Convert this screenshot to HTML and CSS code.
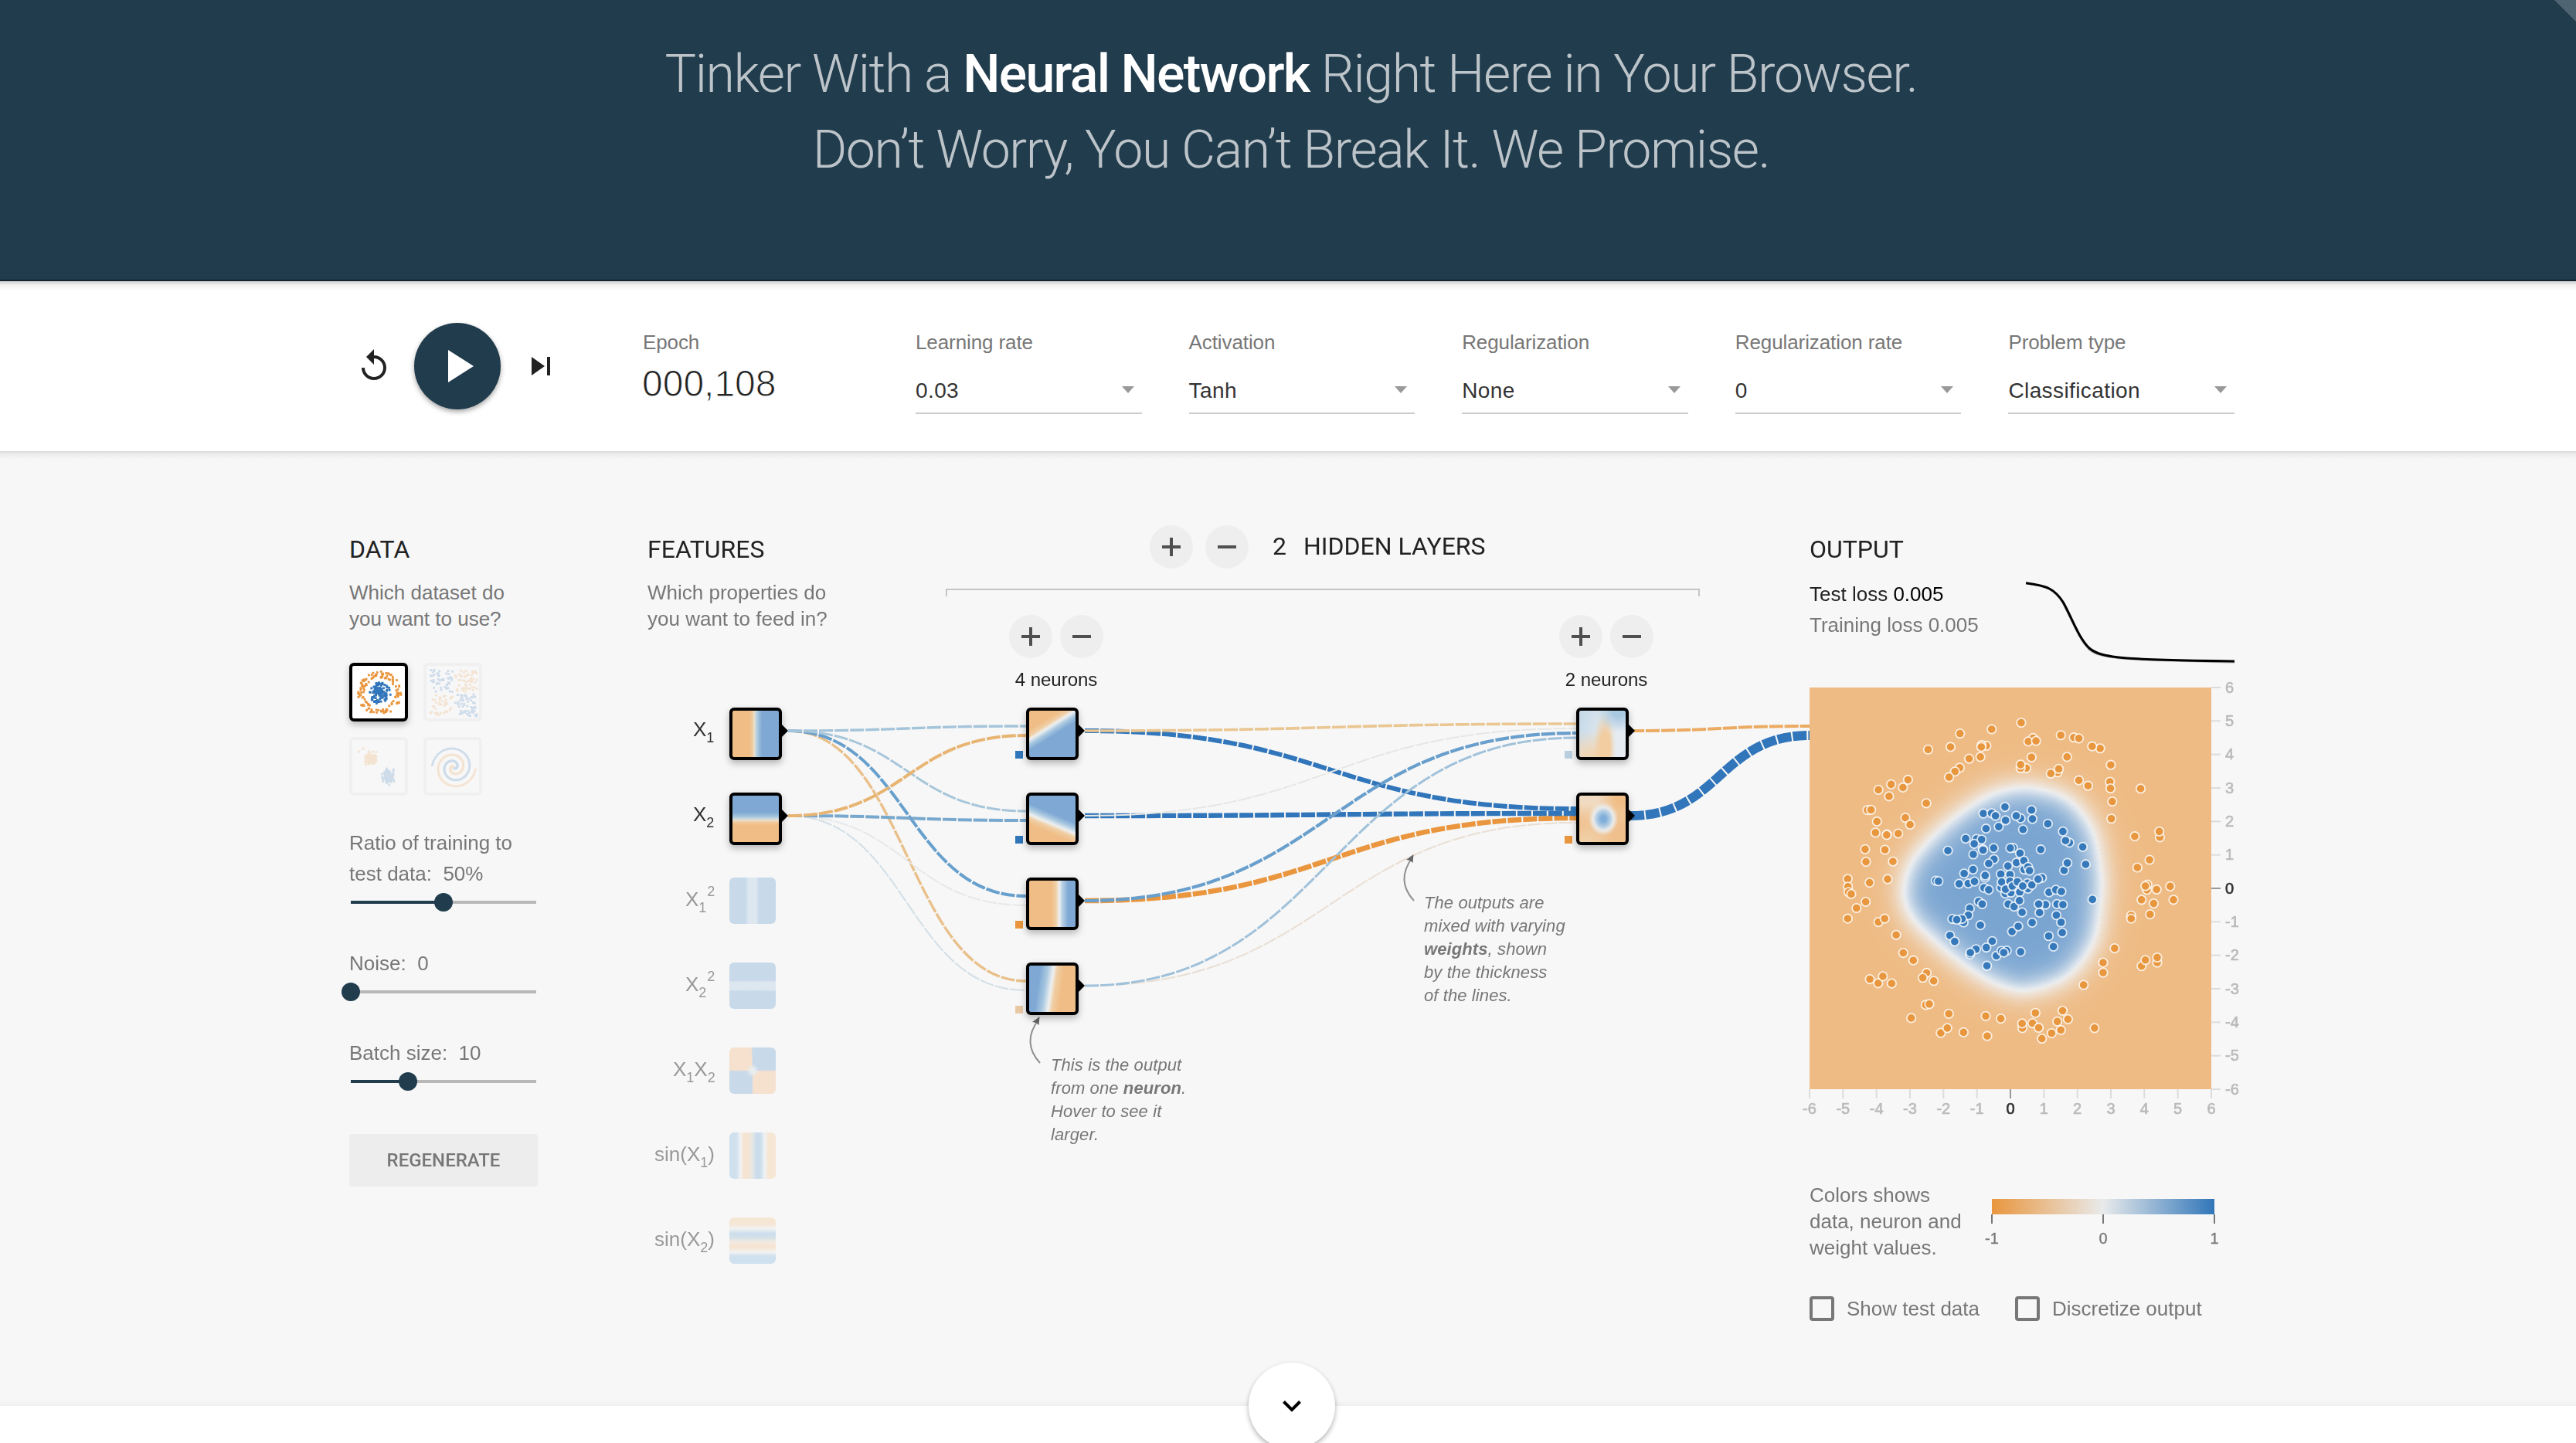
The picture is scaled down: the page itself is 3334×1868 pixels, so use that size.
FILE: index.html
```html
<!DOCTYPE html>
<html lang="en">
<head>
<meta charset="utf-8">
<title>A Neural Network Playground</title>
<link rel="stylesheet" href="styles.css">
</head>
<body>
<header class="hero">
  <h1 class="hero-title">
    <span class="l1">Tinker With a <b>Neural Network</b> Right Here in Your Browser.</span>
    <span class="l2">Don’t Worry, You Can’t Break It. We Promise.</span>
  </h1>
  <svg class="corner" width="28" height="28" viewBox="0 0 28 28"><path d="M0 0H28V28Z" fill="#4f6472"/></svg>
</header>

<section class="controls">
  <div class="container controls-row">
    <div class="timeline">
      <svg width="48" height="48" viewBox="0 0 24 24" fill="#222"><path d="M12 5V1L7 6l5 5V7c3.31 0 6 2.69 6 6s-2.69 6-6 6-6-2.69-6-6H4c0 4.42 3.58 8 8 8s8-3.58 8-8-3.58-8-8-8z"/></svg>
      <div class="play"><svg width="72" height="72" viewBox="0 0 24 24" fill="#fff"><path d="M8 5v14l11-7z"/></svg></div>
      <svg width="48" height="48" viewBox="0 0 24 24" fill="#222"><path d="M6 18l8.5-6L6 6v12zM16 6v12h2V6h-2z"/></svg>
    </div>
    <div class="epoch"><div class="label">Epoch</div><div class="epoch-value">000,108</div></div>
    <div class="selects">
      <div class="control"><div class="label">Learning rate</div><div class="select"><span>0.03</span><i class="caret"></i></div></div>
      <div class="control"><div class="label">Activation</div><div class="select"><span>Tanh</span><i class="caret"></i></div></div>
      <div class="control"><div class="label">Regularization</div><div class="select"><span>None</span><i class="caret"></i></div></div>
      <div class="control"><div class="label">Regularization rate</div><div class="select"><span>0</span><i class="caret"></i></div></div>
      <div class="control"><div class="label">Problem type</div><div class="select"><span>Classification</span><i class="caret"></i></div></div>
    </div>
  </div>
</section>

<main class="main">
  <div class="container columns">
    <section class="data">
      <h2>DATA</h2>
      <p>Which dataset do<br>you want to use?</p>
      <div class="datasets">
        <canvas class="thumb selected" id="circle" width="68" height="68"></canvas>
        <canvas class="thumb" id="xor" width="68" height="68"></canvas>
        <canvas class="thumb" id="gauss" width="68" height="68"></canvas>
        <canvas class="thumb" id="spiral" width="68" height="68"></canvas>
      </div>
      <div class="field first">Ratio of training to<br>test data:&nbsp; 50%</div>
      <div class="slider"><div class="fill" style="width:50%"></div><div class="knob" style="left:50%"></div></div>
      <div class="field">Noise:&nbsp; 0</div>
      <div class="slider"><div class="knob" style="left:0%"></div></div>
      <div class="field">Batch size:&nbsp; 10</div>
      <div class="slider"><div class="fill" style="width:31%"></div><div class="knob" style="left:31%"></div></div>
      <button class="regenerate">REGENERATE</button>
    </section>

    <section class="network">
      <div class="network-head">
        <div class="features-head">
          <h2>FEATURES</h2>
          <p>Which properties do<br>you want to feed in?</p>
        </div>
        <div class="hidden-head">
          <div class="hidden-row">
            <span class="round plus"></span><span class="round minus"></span>
            <h2><span class="count">2</span>HIDDEN LAYERS</h2>
          </div>
          <div class="bracket"></div>
        </div>
      </div>

      <svg class="links" width="1504" height="960" viewBox="838 691 1504 960">
        <g id="links" fill="none"></g>
        <g id="ports"></g>
        <g class="feature-labels">
          <text class="on" x="897" y="953">X<tspan class="sub" dy="8">1</tspan></text>
          <text class="on" x="897" y="1063">X<tspan class="sub" dy="8">2</tspan></text>
          <text x="887" y="1173">X<tspan class="sub" dy="8">1</tspan><tspan class="sub" dy="-21" dx="1">2</tspan></text>
          <text x="887" y="1283">X<tspan class="sub" dy="8">2</tspan><tspan class="sub" dy="-21" dx="1">2</tspan></text>
          <text x="871" y="1393">X<tspan class="sub" dy="8">1</tspan><tspan dy="-8">X</tspan><tspan class="sub" dy="8">2</tspan></text>
          <text x="847" y="1503">sin(X<tspan class="sub" dy="8">1</tspan><tspan dy="-8">)</tspan></text>
          <text x="847" y="1613">sin(X<tspan class="sub" dy="8">2</tspan><tspan dy="-8">)</tspan></text>
        </g>
        <g fill="none" stroke="#8f8f8f" stroke-width="2">
          <path d="M1830 1166Q1806 1140 1828 1110"/>
          <path d="M1346 1376Q1322 1350 1344 1320"/>
        </g>
        <g fill="#666">
          <path d="M1829.500 1106L1828.500 1117L1825 1114L1820 1113Z"/>
          <path d="M1345.500 1316L1344.500 1327L1341 1324L1336 1323Z"/>
        </g>
      </svg>

      <div class="node f1"></div><div class="node f2"></div>
      <div class="node off f3"></div><div class="node off f4"></div><div class="node off f5"></div><div class="node off f6"></div><div class="node off f7"></div>
      <div class="node h1"></div><div class="node h2"></div><div class="node h3"></div><div class="node h4"></div>
      <div class="node n1"></div><div class="node n2"></div>

      <div class="layer layer1"><div><span class="round plus"></span><span class="round minus"></span></div>4 neurons</div>
      <div class="layer layer2"><div><span class="round plus"></span><span class="round minus"></span></div>2 neurons</div>

      <div class="callout weights">The outputs are<br>mixed with varying<br><b>weights</b>, shown<br>by the thickness<br>of the lines.</div>
      <div class="callout neuron">This is the output<br>from one <b>neuron</b>.<br>Hover to see it<br>larger.</div>
    </section>

    <section class="output">
      <h2>OUTPUT</h2>
      <div class="metrics">
        <div class="losses"><div class="test">Test loss <b>0.005</b></div><div class="train">Training loss 0.005</div></div>
        <svg class="loss-chart" width="270" height="112" viewBox="2622 750 270 112" fill="none">
          <path d="M2622 755.500C2650 759 2660 764 2670 781C2682 804 2690 827 2704 841C2718 853 2740 854 2892 857.500" stroke="#aaa" stroke-width="2"/>
          <path d="M2622 754.700C2650 758 2660 763 2670.500 780C2683 803 2690 825 2704 839C2720 853 2755 854 2892 856" stroke="#000" stroke-width="3"/>
        </svg>
      </div>
      <div class="plot">
        <canvas id="heat" width="260" height="260"></canvas>
        <svg id="plot" width="580" height="570" viewBox="0 0 580 570"></svg>
      </div>
      <div class="legend">
        <p>Colors shows<br>data, neuron and<br>weight values.</p>
        <div class="scale">
          <div class="ramp"></div>
          <div class="ticks"><i></i><i></i><i></i></div>
          <div class="tick-labels"><span>-1</span><span>0</span><span>1</span></div>
        </div>
      </div>
      <div class="checks">
        <label class="check"><i></i><span>Show test data</span></label>
        <label class="check"><i></i><span>Discretize output</span></label>
      </div>
    </section>
  </div>
  <div class="more"><svg width="24" height="15" viewBox="0 0 24 15" fill="none" stroke="#000" stroke-width="4"><path d="M1.500 1.500L12 12L22.500 1.500"/></svg></div>
</main>
<script src="script.js"></script>
</body>
</html>
```
FILE: styles.css
```css
* { box-sizing: border-box; }
body { margin: 0; height: 1868px; overflow: hidden; background: #fff; font-family: "Liberation Sans", Arial, sans-serif; font-size: 26px; color: #777; }
h1, h2, p { margin: 0; font-weight: 400; }
svg, canvas { display: block; }
.container { width: 2440px; margin-left: 452px; }

.hero { position: relative; height: 364px; padding-top: 47px; background: #213c4d; border-bottom: 2px solid #14232d; }
.hero-title { font-family: Roboto, sans-serif; font-size: 68px; line-height: 98px; font-weight: 300; letter-spacing: -1.42px; color: #bcc4c9; display: flex; flex-direction: column; align-items: center; padding-left: 8px; white-space: nowrap; }
.hero-title b { font-weight: 500; color: #fff; letter-spacing: -1.7px; }
.corner { position: absolute; top: 0; right: 0; }

.controls { height: 220px; background: linear-gradient(#d0d0d0, #f2f2f2 5px, #fff 12px); }
.controls-row { display: flex; padding-top: 54px; }
.timeline { display: flex; align-items: center; width: 380px; height: 112px; padding-left: 8px; gap: 28px; }
.play { width: 112px; height: 112px; border-radius: 50%; background: #213c4d; display: flex; align-items: center; justify-content: center; box-shadow: 0 3px 6px rgba(0,0,0,.35); }
.label { line-height: 34px; padding-top: 8px; letter-spacing: -0.1px; white-space: nowrap; }
.epoch { width: 353px; }
.epoch-value { font-size: 48px; line-height: 60px; color: #222; margin: 7px 0 0 -1px; -webkit-text-stroke: 1px #fff; }
.selects { flex: 1; display: grid; grid-template-columns: repeat(5, 1fr); gap: 61px; }
.select { display: flex; align-items: center; justify-content: space-between; height: 64px; margin-top: 12px; padding: 6px 10px 0 0; border-bottom: 2px solid #ccc; font-size: 28px; color: #333; letter-spacing: .4px; }
.caret { border: 8px solid transparent; border-top: 9px solid #999; border-bottom: 0; margin-top: -4px; }

.main { height: 1236px; border-top: 2px solid #ddd; background: linear-gradient(#e9e9e9, #f7f7f7 9px, #f7f7f7 1226px, #efefef); }
.columns { display: grid; grid-template-columns: 386px 1504px 550px; padding-top: 105px; height: 1178px; }
h2 { font-family: Roboto, sans-serif; font-size: 32px; line-height: 40px; color: #222; white-space: nowrap; }
p { line-height: 34px; margin-top: 19px; white-space: nowrap; }

.datasets { display: grid; grid-template-columns: 76px 76px; gap: 20px; margin-top: 40px; }
.thumb { width: 76px; height: 76px; border: 4px solid #d8d8d8; border-radius: 6px; opacity: .2; }
.thumb.selected { background: #fff; border-color: #000; opacity: 1; box-shadow: 0 4px 9px rgba(0,0,0,.25); }
.field { line-height: 40px; margin-top: 47px; white-space: nowrap; }
.field.first { margin-top: 41px; }
.slider { position: relative; width: 240px; height: 24px; margin: 5px 0 0 2px; background: linear-gradient(#b8b8b8, #b8b8b8) 0 10px / 240px 4px no-repeat; }
.fill { position: absolute; top: 10px; height: 4px; background: #213c4d; }
.knob { position: absolute; top: 0; width: 24px; height: 24px; margin-left: -12px; border-radius: 50%; background: #213c4d; }
.regenerate { display: block; width: 244px; height: 68px; margin-top: 56px; padding: 0; border: 0; border-radius: 4px; background: #ededed; color: #777; font: 500 24px Roboto, sans-serif; }

.network { position: relative; }
.network-head { display: flex; height: 130px; }
.features-head { width: 386px; }
.hidden-head { width: 976px; margin-top: -11px; }
.hidden-row { display: flex; align-items: center; gap: 16px; padding-left: 264px; height: 56px; }
.hidden-row h2 { margin-left: 15px; position: relative; top: -1px; }
.count { display: inline-block; width: 40px; }
.bracket { height: 10px; margin-top: 26px; border: 2px solid #c6c6c6; border-bottom: 0; }
.round { display: inline-block; width: 56px; height: 56px; border-radius: 50%; background: #eee; flex: none; }
.plus { background: linear-gradient(#505050, #505050) center / 24px 4px no-repeat, linear-gradient(#505050, #505050) center / 4px 24px no-repeat, #eee; }
.minus { background: linear-gradient(#505050, #505050) center / 24px 4px no-repeat, #eee; }

.links { position: absolute; left: 0; top: 0; }
.feature-labels { font-size: 26px; fill: #999; }
.feature-labels .on { fill: #333; }
.feature-labels .sub { font-size: 18px; }

.node { position: absolute; width: 68px; height: 68px; border: 4px solid #000; border-radius: 6px; background-origin: padding-box; box-shadow: 0 4px 10px rgba(0,0,0,.28); }
.node.off { width: 60px; height: 60px; border: 0; box-shadow: none; }
.f1, .f2, .off { left: 106px; }
.h1, .h2, .h3, .h4 { left: 490px; }
.n1, .n2 { left: 1202px; }
.f1, .h1, .n1 { top: 225px; }
.f2, .h2, .n2 { top: 335px; }
.f3, .h3 { top: 445px; }
.f4, .h4 { top: 555px; }
.f5 { top: 665px; }
.f6 { top: 775px; }
.f7 { top: 885px; }
.f1 { background-image: linear-gradient(90deg, #f0bd86 36%, #efcb9f 43%, #ecdfcb 47%, #c0d5e0 51%, #a0c1dc 56%, #7fa9d4 64%); }
.f2 { background-image: linear-gradient(#7fa9d4 36%, #a0c1dc 44%, #c0d5e0 49%, #ecdfcb 53%, #efcb9f 57%, #f0bd86 64%); }
.f3 { background: linear-gradient(90deg, #c8d9ea 35%, #dde7f0 41%, #dde7f0 58%, #c8d9ea 64%); }
.f4 { background: linear-gradient(#c8d9ea 38%, #dde7f0 43%, #dde7f0 58%, #c8d9ea 63%); }
.f5 { background: radial-gradient(circle, #e8eef0 6%, rgba(232,238,240,0) 20%), conic-gradient(#c8d9ea 24%, #f6e1ce 26% 49%, #c8d9ea 51% 74%, #f6e1ce 76% 99%, #c8d9ea); }
.f6 { background: linear-gradient(90deg, #cfe0ee 15%, #f1f3f3 24%, #f6e4d2 31%, #f6e4d2 40%, #e4e8e4 50%, #cbddec 58%, #cbddec 67%, #eff2f5 76%, #f6e6d4 84%); }
.f7 { background: linear-gradient(#f6e6d4 14%, #f1f2f2 24%, #cbddec 35%, #d4e0e9 43%, #f2e9df 53%, #f6e3d0 64%, #f3f3f2 75%, #cfe0ee 83%); }
.h1 { background-image: linear-gradient(147.6deg, #f0bd86 25%, #f0cda2 33%, #eef0f0 38.500%, #a9c8e0 45%, #7fa9d4 53%); }
.h2 { background-image: linear-gradient(203deg, #7fa9d4 42%, #a9c8e0 50%, #eef0f0 58%, #f0cda2 64%, #f0bd86 73%); }
.h3 { background-image: linear-gradient(90deg, #f0bd86 48%, #f0d0a8 58%, #eef0f0 65%, #b5cfe3 72%, #7fa9d4 84%); }
.h4 { background-image: linear-gradient(98deg, #7fa9d4 22%, #a9c8e0 36%, #eef0f0 47%, #f0cda2 55%, #f0bd86 68%); }
.n1 { background-image: radial-gradient(circle at 85% 0%, #a9c9e1 0 10%, rgba(190,212,230,0) 36%), linear-gradient(90deg, rgba(230,235,241,0) 66%, #e6ebf1 80%), radial-gradient(ellipse 26% 76% at 56% 78%, #f1cda1 40%, rgba(240,220,198,0) 100%), radial-gradient(ellipse 85% 62% at 30% 105%, #f0d5b5 25%, rgba(238,236,232,0) 100%), linear-gradient(110deg, #c3d8e8, #e6ebef 60%); }
.n2 { background-image: radial-gradient(ellipse 22% 25% at 52% 50%, #80aeda 25%, #b0cce3 65%, #ebebea 100%, rgba(239,224,206,0) 145%), radial-gradient(circle at 92% 5%, #f0bd86 10%, rgba(240,189,134,0) 40%), radial-gradient(circle at 100% 90%, #f0c08c 20%, rgba(240,192,140,0) 60%), radial-gradient(ellipse at 0% 60%, #f0c495 10%, rgba(240,196,149,0) 50%), linear-gradient(#f0dcc4, #f0d0a8); }

.layer { position: absolute; top: 105px; width: 122px; text-align: center; font-size: 24px; line-height: 34px; color: #222; white-space: nowrap; }
.layer > div { display: flex; gap: 10px; margin-bottom: 11px; }
.layer1 { left: 468px; }
.layer2 { left: 1180px; }
.callout { position: absolute; font-size: 22px; line-height: 30px; font-style: italic; white-space: nowrap; letter-spacing: .1px; }
.weights { left: 1005px; top: 463px; }
.neuron { left: 522px; top: 673px; }

.metrics { display: flex; justify-content: space-between; height: 112px; margin-top: 18px; line-height: 40px; white-space: nowrap; }
.test { color: #222; }
.test b { font-weight: 400; color: #000; }
.loss-chart { margin-top: 1px; }
.plot { position: relative; width: 520px; height: 520px; margin-top: 29px; }
#heat { width: 520px; height: 520px; }
#plot { position: absolute; left: 0; top: 0; overflow: visible; font-size: 20px; font-weight: 700; }
.legend { display: flex; margin-top: 120px; height: 102px; }
.legend p { width: 236px; margin: 0; }
.scale { width: 288px; padding-top: 22px; }
.ramp { height: 20px; background: linear-gradient(90deg, #e9963e, #e8eaeb, #3176b9); }
.ticks { display: flex; justify-content: space-between; height: 12px; margin: 0 -1px; }
.ticks i { width: 2px; background: #777; }
.tick-labels { display: flex; justify-content: space-between; margin: 8px -20px 0; font-size: 20px; line-height: 22px; }
.tick-labels span { width: 40px; text-align: center; -webkit-text-stroke: .3px #777; }
.checks { display: flex; margin-top: 46px; }
.check { display: flex; align-items: center; width: 266px; height: 32px; white-space: nowrap; }
.check i { width: 32px; height: 32px; border: 4px solid #777; border-radius: 4px; margin-right: 16px; }

.more { position: relative; width: 112px; height: 112px; margin-left: 1616px; border-radius: 50%; background: #fff; box-shadow: 0 3px 6px rgba(0,0,0,.3); display: flex; justify-content: center; padding-top: 49px; }
```
FILE: script.js
```js
const NS = 'http://www.w3.org/2000/svg';
function add(parent, name, attrs, text) {
  const el = document.createElementNS(NS, name);
  for (const k in attrs) el.setAttribute(k, attrs[k]);
  if (text !== undefined) el.textContent = text;
  parent.appendChild(el);
  return el;
}

// Network links: [x1, y1, x2, y2, colour, width]
const links = [
  [1020, 1056, 1328, 1282, '#d2dfe7', 2], [1020, 946, 1328, 1270, '#e9c08b', 3.4],
  [1020, 1056, 1328, 1172, '#e6e8e9', 2], [1020, 946, 1328, 1160, '#68a0cd', 4],
  [1020, 1056, 1328, 1062, '#78a8cd', 4], [1020, 946, 1328, 1050, '#a8c6da', 3],
  [1020, 1056, 1328, 952, '#e8b472', 4], [1020, 946, 1328, 940, '#a4c4da', 3.4],
  [1404, 1276, 2040, 1065, '#e9ded3', 2], [1404, 1166, 2040, 1059, '#e9963e', 6.6],
  [1404, 1056, 2040, 1053, '#3176ba', 6.4], [1404, 946, 2040, 1047, '#3176ba', 6],
  [1404, 1276, 2040, 955, '#a0c1da', 3], [1404, 1166, 2040, 949, '#699fcc', 4.2],
  [1404, 1056, 2040, 943, '#e6e7e4', 2], [1404, 946, 2040, 937, '#eac692', 3.6],
  [2110, 1056, 2342, 952, '#3176ba', 12], [2110, 946, 2342, 940, '#ebab62', 4]
];
const lg = document.getElementById('links');
for (const [x1, y1, x2, y2, c, w] of links) {
  const m = (x1 + x2) / 2;
  add(lg, 'path', { d: `M${x1} ${y1}C${m} ${y1} ${m} ${y2} ${x2} ${y2}`, stroke: c, 'stroke-width': w, 'stroke-dasharray': '18 2' });
}

const ports = document.getElementById('ports');
for (const [x, y] of [[1012, 946], [1012, 1056], [1396, 946], [1396, 1056], [1396, 1166], [1396, 1276], [2108, 946], [2108, 1056]]) {
  add(ports, 'path', { d: `M${x - 1} ${y - 9}L${x + 8} ${y}L${x - 1} ${y + 9}Z`, fill: '#000' });
}
for (const [x, y, c] of [[1314, 972, '#3176ba'], [1314, 1082, '#3176ba'], [1314, 1192, '#e9963e'], [1314, 1302, '#e9c9a4'], [2025, 972, '#b9cfdf'], [2025, 1082, '#e9963e']]) {
  add(ports, 'rect', { x, y, width: 10, height: 10, fill: c });
}

// Training points on a 1359 x 1406 grid whose origin is (57, 27)
const orange = '773,150 673,173 566,188 534,235 458,244 655,231 639,229 638,235 635,270 597,276 565,308 549,321 529,341 390,350 373,377 333,366 290,385 326,408 452,432 253,456 265,455 381,483 397,507 285,496 280,535 319,541 318,543 357,538 245,593 312,595 248,637 339,636 186,697 321,698 260,710 187,724 189,743 198,750 247,777 216,799 186,836 290,848 311,836 350,893 374,956 408,982 453,1026 440,1043 477,1054 261,1048 289,1062 305,1038 335,1063 450,1138 462,1135 401,1184 528,1169 501,1236 523,1219 578,1234 653,1177 704,1186 658,1247 777,1219 776,1203 811,1202 821,1166 832,1218 843,1256 876,1237 907,1226 895,1196 931,1188 913,1158 1021,1219 984,1068 1050,1025 1050,990 1089,940 1180,1002 1193,981 1233,990 1233,972 1145,825 1145,836 1209,821 1180,770 1221,783 1288,770 1231,734 1277,723 1198,735 1200,717 1193,722 1166,657 1207,630 1157,548 1242,551 1240,531 1078,486 1081,426 1177,381 1073,357 1075,380 1076,298 999,371 968,352 896,324 900,312 873,328 928,270 808,271 790,309 771,309 771,297 813,204 797,216 823,214 907,194 951,202 968,205 1040,240 1013,233'.split(' ').map(s => s.split(',').map(Number));
const blue = '718,445 645,468 673,467 686,476 720,492 771,485 756,476 808,456 811,487 697,514 654,521 779,524 863,504 914,531 585,556 622,557 639,559 614,574 643,593 644,596 680,589 745,588 736,589 839,594 769,607 936,570 923,563 981,585 525,598 611,611 681,628 663,643 757,640 782,633 728,652 610,664 580,678 651,692 651,685 704,680 735,682 783,664 796,655 801,668 918,667 929,641 991,646 484,703 493,705 563,714 594,713 615,706 647,728 663,735 705,727 707,708 735,705 719,748 738,745 720,733 743,722 760,707 768,743 796,731 794,712 809,718 778,722 843,693 830,698 867,744 890,735 909,741 1014,769 629,776 641,785 729,785 749,794 767,773 776,814 855,787 832,785 894,785 914,787 835,815 892,824 599,800 594,824 578,849 540,837 573,837 555,840 635,859 810,850 742,881 763,863 908,849 912,885 866,897 882,934 532,895 548,916 675,915 655,937 620,943 600,961 601,955 689,966 706,949 724,948 714,955 771,952 657,1001'.split(' ').map(s => s.split(',').map(Number));
const toUnits = ([x, y]) => [(x - 57) / 113.25 - 6, 6 - (y - 27) / 117.17];

// Output heatmap: signed distance from the decision boundary
const rim = [[.64, 2.99], [1.7, 2.65], [2.41, 1.79], [2.69, .6], [2.69, -.43], [2.45, -1.62], [1.7, -2.6], [.56, -3.03], [-.33, -2.88], [-1.21, -2.39], [-2.18, -1.62], [-2.93, -.85], [-3.17, -.09], [-2.93, .77], [-2.18, 1.66], [-1.21, 2.43], [-.33, 2.88]];
const curve = [];
for (let i = 0; i < rim.length; i++) {
  const n = rim.length, p = [rim[(i + n - 1) % n], rim[i], rim[(i + 1) % n], rim[(i + 2) % n]];
  for (let k = 0; k < 10; k++) {
    const t = k / 10;
    curve.push([0, 1].map(a => .5 * (2 * p[1][a] + (p[2][a] - p[0][a]) * t + (2 * p[0][a] - 5 * p[1][a] + 4 * p[2][a] - p[3][a]) * t * t + (3 * p[1][a] - p[0][a] - 3 * p[2][a] + p[3][a]) * t * t * t)));
  }
}
function inside(x, y) {
  let c = false;
  for (let i = 0, j = curve.length - 1; i < curve.length; j = i++) {
    const [xi, yi] = curve[i], [xj, yj] = curve[j];
    if ((yi > y) !== (yj > y) && x < (xj - xi) * (y - yi) / (yj - yi) + xi) c = !c;
  }
  return c;
}
const heat = document.getElementById('heat').getContext('2d');
const img = heat.createImageData(260, 260);
const MID = [238, 240, 242], BLUE = [122, 165, 209], ORANGE = [238, 187, 132];
for (let j = 0; j < 260; j++) for (let i = 0; i < 260; i++) {
  const x = (i + .5) / 260 * 12 - 6, y = 6 - (j + .5) / 260 * 12;
  let d = 99;
  for (const [cx, cy] of curve) d = Math.min(d, (cx - x) ** 2 + (cy - y) ** 2);
  const v = Math.tanh(Math.sqrt(d) / .5), end = inside(x, y) ? BLUE : ORANGE, o = (j * 260 + i) * 4;
  for (let k = 0; k < 3; k++) img.data[o + k] = MID[k] + (end[k] - MID[k]) * v;
  img.data[o + 3] = 255;
}
heat.putImageData(img, 0, 0);

const plot = document.getElementById('plot');
for (const [set, fill] of [[orange, '#e8973e'], [blue, '#3679bb']]) {
  for (const p of set) {
    const [x, y] = toUnits(p);
    add(plot, 'circle', { cx: (x + 6) / 12 * 520, cy: (6 - y) / 12 * 520, r: 5.7, fill, stroke: '#fff', 'stroke-width': 1.8, 'stroke-opacity': .8 });
  }
}
for (let v = -6; v <= 6; v++) {
  const a = (v + 6) / 12 * 520, b = 520 - a, zero = v === 0;
  const line = { stroke: zero ? '#999' : '#ddd', 'stroke-width': 2 };
  const text = { fill: zero ? '#333' : '#bbb', 'font-weight': 400, stroke: zero ? '#333' : '#bbb', 'stroke-width': .7 };
  add(plot, 'path', { d: `M${a} 520V532`, ...line });
  add(plot, 'path', { d: `M520 ${b}H532`, ...line });
  add(plot, 'text', { x: a, y: 552, 'text-anchor': 'middle', ...text }, v);
  add(plot, 'text', { x: 538, y: b + 6.5, ...text }, v);
}

// Dataset thumbnails
let seed = 7;
const rnd = () => (seed = (seed * 16807) % 2147483647) / 2147483647;
const normal = () => Math.sqrt(-2 * Math.log(rnd())) * Math.cos(2 * Math.PI * rnd());
function thumb(id, pts) {
  const c = document.getElementById(id).getContext('2d');
  for (const [x, y, pos] of pts) {
    c.fillStyle = pos ? '#3176ba' : '#e9963e';
    c.fillRect((x + 6) / 12 * 68, (y + 6) / 12 * 68, 2.8, 2.8);
  }
}
thumb('circle', [...orange.map(p => [...toUnits(p), 0]), ...blue.map(p => [...toUnits(p), 1])].map(([x, y, c]) => [x, -y, c]));
const xor = [], gauss = [], spiral = [];
for (let i = 0; i < 200; i++) {
  let x = rnd() * 10 - 5, y = rnd() * 10 - 5;
  x += x > 0 ? .3 : -.3; y += y > 0 ? .3 : -.3;
  xor.push([x, y, x * y >= 0]);
}
for (let i = 0; i < 110; i++) {
  gauss.push([2 + normal() * .65, 2 + normal() * .65, 1], [-2 + normal() * .65, -2 + normal() * .65, 0]);
  const r = i / 110 * 5, t = 1.75 * i / 110 * 2 * Math.PI;
  spiral.push([r * Math.sin(t), r * Math.cos(t), 1], [-r * Math.sin(t), -r * Math.cos(t), 0]);
}
thumb('xor', xor); thumb('gauss', gauss); thumb('spiral', spiral);
```
